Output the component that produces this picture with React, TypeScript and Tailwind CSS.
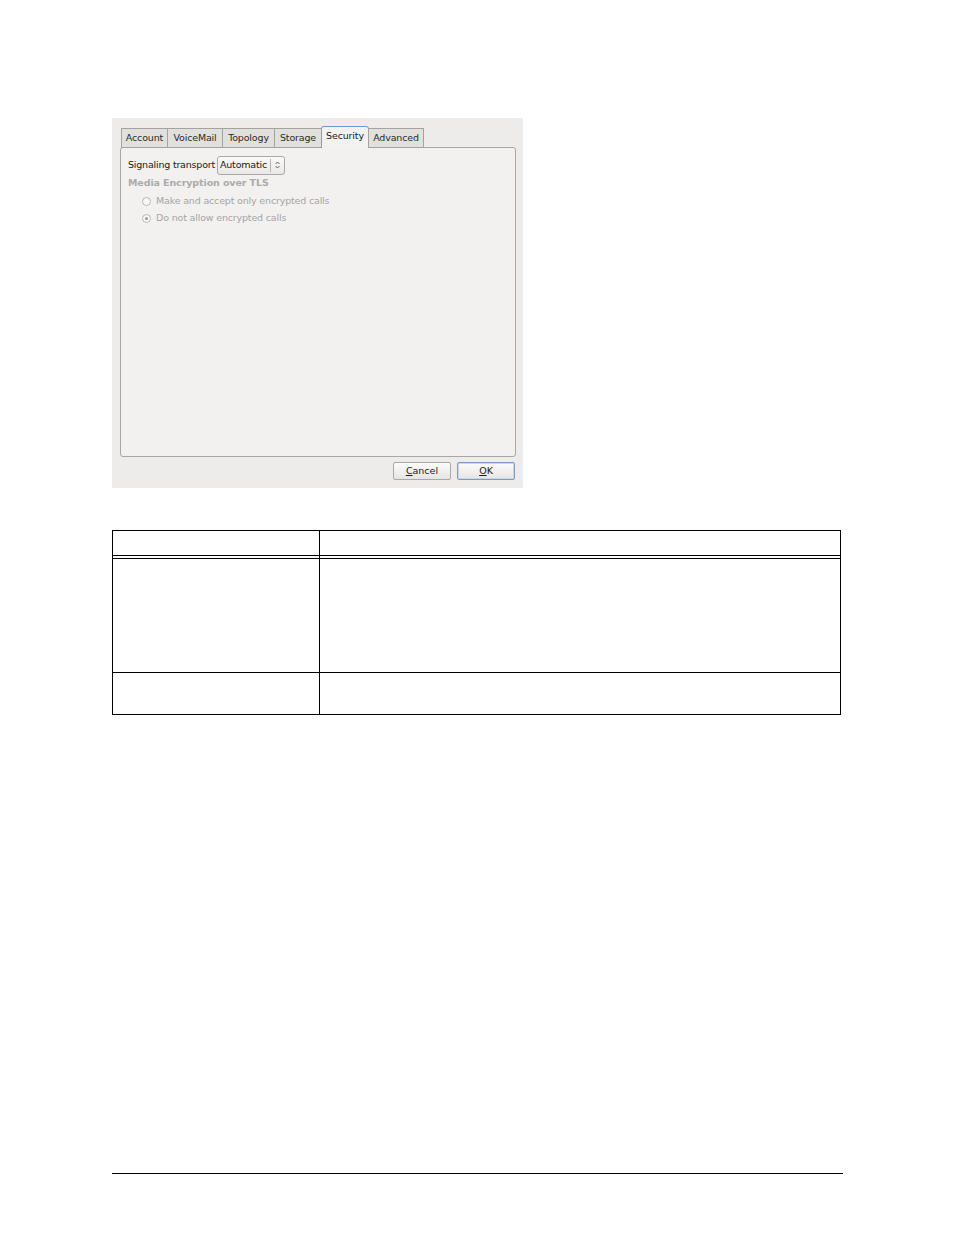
import React from 'react';

const tabs = ['Account', 'VoiceMail', 'Topology', 'Storage', 'Security', 'Advanced'];
const tabWidths: Record<string, string> = {
  Account: 'w-[47px]',
  VoiceMail: 'w-[56px]',
  Topology: 'w-[53px]',
  Storage: 'w-[48px]',
  Security: 'w-[48px]',
  Advanced: 'w-[56px]',
};

function Radio({ checked }: { checked?: boolean }) {
  return (
    <span className="w-[9px] h-[9px] rounded-full border border-[#b9b9b9] bg-[#f7f7f7] flex items-center justify-center">
      {checked && <span className="w-[3px] h-[3px] rounded-full bg-[#9a9a9a]" />}
    </span>
  );
}

function Dialog() {
  return (
    <div className="w-[411px] h-[370px] bg-[#edecea] pt-[8px] pl-[8px] pr-[7px] flex flex-col" style={{ fontFamily: '"DejaVu Sans", sans-serif' }}>
      <div className="flex items-end h-[22px] relative z-10 pl-px">
        {tabs.map((t) => {
          const active = t === 'Security';
          return (
            <div
              key={t}
              className={
                active
                  ? `${tabWidths[t]} h-[22px] bg-[#f3f2f1] border border-b-0 border-[#9a9a9a] border-t-[#6f99c8] rounded-t-[3px] flex items-center justify-center text-[9.5px] tracking-[-0.15px] text-[#1a1a1a] pb-[2px] -ml-px`
                  : `${tabWidths[t]} h-[20px] bg-[#e2e0dd] border border-[#a3a3a3] -ml-px first:ml-0 flex items-center justify-center text-[9.5px] tracking-[-0.15px] text-[#2a2a2a]`
              }
            >
              {t}
            </div>
          );
        })}
      </div>
      <div className="-mt-px h-[310px] bg-[#f2f1f0] border border-[#a7a7a7] rounded-[3px] px-[7px] pt-[8px]">
        <div className="flex items-center gap-[2px] h-[18px]">
          <span className="text-[9.5px] tracking-[-0.2px] text-[#1a1a1a]">Signaling transport</span>
          <div className="h-[19px] w-[68px] border border-[#a9a9a9] rounded-[3px] bg-gradient-to-b from-[#fbfbfb] to-[#e9e8e6] flex items-center">
            <span className="text-[9.5px] tracking-[-0.2px] text-[#1a1a1a] pl-[2px]">Automatic</span>
            <span className="ml-auto h-[13px] border-l border-[#b5b5b5] w-[14px] flex items-center justify-center">
              <svg width="5" height="8" viewBox="0 0 5 8">
                <path d="M0.5 3 L2.5 1 L4.5 3 M0.5 5 L2.5 7 L4.5 5" stroke="#555" strokeWidth="0.9" fill="none" />
              </svg>
            </span>
          </div>
        </div>
        <div className="mt-[2px] text-[9.5px] font-bold tracking-[-0.1px] text-[#ababab] h-[13px] leading-[13px]">Media Encryption over TLS</div>
        <div className="mt-[6px] pl-[14px] flex flex-col gap-[5px]">
          <div className="flex items-center gap-[5px] h-[12px]">
            <Radio />
            <span className="text-[9.5px] tracking-[-0.17px] text-[#a5a5a5]">Make and accept only encrypted calls</span>
          </div>
          <div className="flex items-center gap-[5px] h-[12px]">
            <Radio checked />
            <span className="text-[9.5px] tracking-[-0.17px] text-[#a5a5a5]">Do not allow encrypted calls</span>
          </div>
        </div>
      </div>
      <div className="flex justify-end gap-[6px] mt-[5px] pr-px">
        <button className="w-[58px] h-[18px] border border-[#a9a9a9] rounded-[2px] bg-gradient-to-b from-[#fcfcfc] to-[#e6e5e3] text-[9.5px] text-[#1a1a1a] flex items-center justify-center">
          <span><span className="underline">C</span>ancel</span>
        </button>
        <button className="w-[58px] h-[18px] border border-[#7a9cc4] rounded-[2px] bg-gradient-to-b from-[#fcfcfc] to-[#e6e5e3] text-[9.5px] text-[#1a1a1a] flex items-center justify-center shadow-[inset_0_0_0_1px_#c9d8ea]">
          <span><span className="underline">O</span>K</span>
        </button>
      </div>
    </div>
  );
}

function Table() {
  return (
    <div className="w-[729px] border border-black">
      <div className="flex h-[25px] border-b border-black">
        <div className="w-[207px] border-r border-black" />
        <div className="flex-1" />
      </div>
      <div className="flex h-[2px]">
        <div className="w-[207px] border-r border-black" />
        <div className="flex-1" />
      </div>
      <div className="flex h-[115px] border-t border-b border-black">
        <div className="w-[207px] border-r border-black" />
        <div className="flex-1" />
      </div>
      <div className="flex h-[41px]">
        <div className="w-[207px] border-r border-black" />
        <div className="flex-1" />
      </div>
    </div>
  );
}

export default function App() {
  return (
    <div className="w-[954px] h-[1235px] bg-white flex flex-col pl-[112px] pt-[118px]">
      <Dialog />
      <div className="mt-[42px]">
        <Table />
      </div>
      <div className="mt-[458px] w-[731px] h-px bg-black" />
    </div>
  );
}
